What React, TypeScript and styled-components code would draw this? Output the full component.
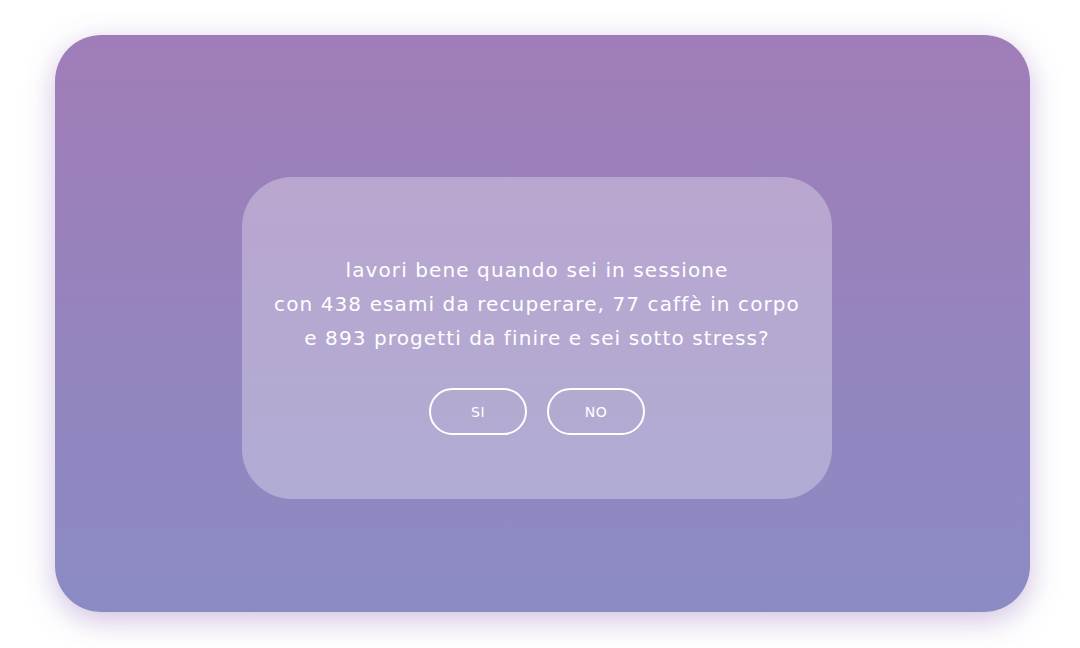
import React from "react";
import styled, { createGlobalStyle } from "styled-components";

const Global = createGlobalStyle`
  html, body { margin: 0; padding: 0; background: #ffffff; }
  body { font-family: "DejaVu Sans", "Open Sans", sans-serif; }
`;

const Page = styled.div`
  width: 1080px;
  height: 648px;
  box-sizing: border-box;
  padding: 35px 50px 36px 55px;
  display: flex;
`;

const Stage = styled.div`
  flex: 1;
  border-radius: 46px;
  background: linear-gradient(180deg, #a07db8 0%, #8b8bc3 100%);
  box-shadow: 0 8px 30px rgba(130, 90, 170, 0.38);
  box-sizing: border-box;
  padding: 142px 0 0 187px;
  display: flex;
  align-items: flex-start;
`;

const Dialog = styled.div`
  width: 590px;
  height: 322px;
  box-sizing: border-box;
  border-radius: 50px;
  background: rgba(255, 255, 255, 0.3);
  padding-top: 76px;
  display: flex;
  flex-direction: column;
  align-items: center;
`;

const Question = styled.p`
  margin: 0;
  color: #ffffff;
  font-family: "DejaVu Sans", "Open Sans", sans-serif;
  font-size: 20px;
  line-height: 34px;
  letter-spacing: 1.1px;
  text-align: center;
`;

const Buttons = styled.div`
  margin-top: 33px;
  display: flex;
  gap: 20px;
`;

const Choice = styled.button`
  width: 98px;
  height: 47px;
  box-sizing: border-box;
  border: 2px solid #ffffff;
  border-radius: 24px;
  background: transparent;
  color: #ffffff;
  font-family: "DejaVu Sans", "Open Sans", sans-serif;
  font-size: 14px;
  letter-spacing: 0.6px;
  cursor: pointer;
`;

export default function App() {
  return (
    <>
      <Global />
      <Page>
        <Stage>
          <Dialog>
            <Question>
              lavori bene quando sei in sessione
              <br />
              con 438 esami da recuperare, 77 caffè in corpo
              <br />e 893 progetti da finire e sei sotto stress?
            </Question>
            <Buttons>
              <Choice>SI</Choice>
              <Choice>NO</Choice>
            </Buttons>
          </Dialog>
        </Stage>
      </Page>
    </>
  );
}
